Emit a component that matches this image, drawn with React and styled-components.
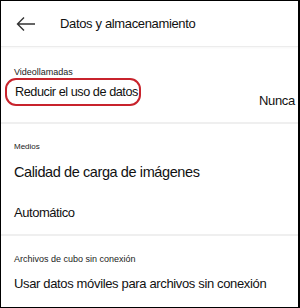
import React from 'react';
import styled, { createGlobalStyle } from 'styled-components';

const GlobalStyle = createGlobalStyle`
  html, body {
    margin: 0;
    padding: 0;
    background: #fff;
  }
  body {
    font-family: "Liberation Sans", Arial, sans-serif;
    color: #111;
  }
`;

const Frame = styled.div`
  box-sizing: border-box;
  width: 300px;
  height: 308px;
  border: 1px solid #000;
  border-right-width: 2px;
  overflow: hidden;
  background: #fff;
`;

const Header = styled.header`
  display: flex;
  align-items: center;
  height: 45px;
  border-bottom: 1px solid #ececec;
  box-shadow: 0 1px 2px rgba(0, 0, 0, 0.04);
`;

const BackButton = styled.button`
  display: flex;
  align-items: center;
  justify-content: center;
  width: 46px;
  height: 45px;
  padding: 0 0 0 4px;
  border: 0;
  background: none;
  color: #333;
`;

const Title = styled.h1`
  margin: 0 0 0 13px;
  font-size: 13px;
  font-weight: 400;
  letter-spacing: -0.35px;
`;

const Section = styled.section`
  padding: ${(p) => p.$pad || '17px 0 0 13px'};
  border-bottom: ${(p) => (p.$last ? '0' : '2px solid #efefef')};
`;

const Label = styled.div`
  font-size: ${(p) => p.$size || 9}px;
  line-height: ${(p) => p.$lh || 12}px;
  color: #222;
`;

const Row = styled.div`
  display: flex;
  justify-content: space-between;
  align-items: ${(p) => p.$align || 'center'};
  height: ${(p) => p.$h}px;
`;

const Primary = styled.span`
  font-size: ${(p) => p.$size || 13}px;
  letter-spacing: ${(p) => p.$ls ?? -0.45}px;
  color: #111;
  white-space: nowrap;
`;

const Highlight = styled.span`
  display: inline-flex;
  align-items: center;
  margin: 1px 0 0 -9px;
  padding: 0 1px 0 8px;
  height: 24px;
  border: 2px solid #c8232c;
  border-radius: 11px;
`;

const Value = styled.span`
  font-size: 13px;
  letter-spacing: -0.3px;
  margin: 16px 3px 0 0;
`;

const Toggle = styled.div`
  position: relative;
  width: 22px;
  height: 14px;
  margin: 9px 0 0 238px;
  border-radius: 7px;
  background: #cfcfcf;
  &::after {
    content: '';
    position: absolute;
    left: -1px;
    top: -1px;
    width: 15px;
    height: 15px;
    border-radius: 50%;
    background: #ececec;
  }
`;

export default function App() {
  return (
    <>
      <GlobalStyle />
      <Frame>
        <Header>
          <BackButton aria-label="Atrás">
            <svg width="20" height="16" viewBox="0 0 20 16" fill="none" stroke="#333" strokeWidth="1.4">
              <path d="M19 8H1.5M8 1.5L1.5 8L8 14.5" />
            </svg>
          </BackButton>
          <Title>Datos y almacenamiento</Title>
        </Header>

        <Section $pad="20px 0 0 13px">
          <Label $lh={10}>Videollamadas</Label>
          <Row $h={45} $align="flex-start">
            <Highlight>
              <Primary $size={12.7} $ls={-0.45}>Reducir el uso de datos</Primary>
            </Highlight>
            <Value>Nunca</Value>
          </Row>
        </Section>

        <Section>
          <Label $size={8}>Medios</Label>
          <Row $h={38}>
            <Primary $size={14.5} $ls={-0.4}>Calidad de carga de imágenes</Primary>
          </Row>
          <Row $h={43}>
            <Primary>Automático</Primary>
          </Row>
        </Section>

        <Section $last>
          <Label>Archivos de cubo sin conexión</Label>
          <Row $h={37}>
            <Primary $ls={-0.35}>Usar datos móviles para archivos sin conexión</Primary>
          </Row>
          <Toggle />
        </Section>
      </Frame>
    </>
  );
}
